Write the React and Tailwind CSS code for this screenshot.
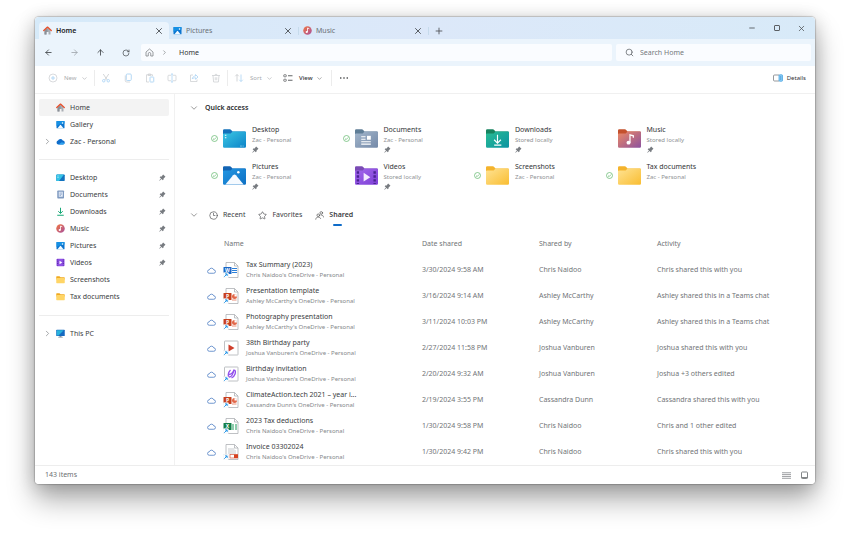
import React, { useState } from "react";
import {
  ArrowLeft,
  ArrowRight,
  ArrowUp,
  ChevronDown,
  ChevronRight,
  Clock3,
  Minus,
  Plus,
  RotateCw,
  Search,
  Star,
  X,
} from "lucide-react";

/* ---------- small icons ---------- */

const HomeIcon = () => (
  <svg viewBox="0 0 18 18" className="size-[9px] shrink-0">
    <path d="M3 8l6-5 6 5v9h-4v-5H7v5H3z" fill="#a9adb3" />
    <path d="M3 9v8h4v-5h2V5z" fill="#8b9097" />
    <path d="M1.500 9L9 2.200 16.500 9" fill="none" stroke="#e8502c" strokeWidth="2.600" strokeLinecap="round" strokeLinejoin="round" />
  </svg>
);

const PictureIcon = () => (
  <svg viewBox="0 0 18 18" className="size-[9px] shrink-0">
    <rect x="1" y="2" width="16" height="14.500" rx="1" fill="#0b74cf" />
    <path d="M1 3a1 1 0 011-1h14a1 1 0 011 1v4L9 8 1 12z" fill="#1590e4" />
    <path d="M3 16.500l5.200-6.700q.8-.8 1.600 0l5.200 6.700z" fill="#f4faff" />
    <circle cx="13" cy="6" r="1.500" fill="#fff" />
  </svg>
);

const MusicIcon = () => (
  <svg viewBox="0 0 18 18" className="size-[9px] shrink-0">
    <defs>
      <linearGradient id="musicDot" x1="0" y1="0" x2="1" y2="1">
        <stop offset="0" stopColor="#f2753f" />
        <stop offset="1" stopColor="#a8529f" />
      </linearGradient>
    </defs>
    <circle cx="9" cy="9" r="8.500" fill="url(#musicDot)" />
    <ellipse cx="7.500" cy="12" rx="2.200" ry="2" fill="#fff" />
    <path d="M9 12V4l3.500 1.500" stroke="#fff" strokeWidth="1.600" fill="none" />
  </svg>
);

const OneDriveIcon = () => (
  <svg viewBox="0 0 18 18" className="size-[9px] shrink-0">
    <path d="M4.500 15A4 4 0 014 7.200 5.300 5.300 0 0113.500 7a4 4 0 010 8z" fill="#0f6cc9" />
    <path d="M4.500 15l7-4.500 5.800 1.300A3.800 3.800 0 0113.500 15z" fill="#2fa4f0" />
  </svg>
);

const DesktopIcon = () => (
  <svg viewBox="0 0 18 18" className="size-[9px] shrink-0">
    <rect x="0.500" y="3" width="17" height="13" rx="1.500" fill="#1273bf" />
    <path d="M2 3h14l-10 13H2A1.500 1.500 0 01.5 14.500v-10z" fill="#34c3e6" />
    <path d="M3 6h2M3 9h2" stroke="#fff" strokeWidth="1.300" />
  </svg>
);

const DocumentIcon = () => (
  <svg viewBox="0 0 18 18" className="size-[9px] shrink-0">
    <rect x="2.500" y="1" width="13.500" height="16" rx="1.500" fill="#7f9ac0" />
    <rect x="5.500" y="3.500" width="8" height="10" fill="#e8effa" />
    <path d="M7 6h5M7 8.500h5M7 11h3" stroke="#5f7fb0" strokeWidth="1" />
  </svg>
);

const DownloadIcon = () => (
  <svg viewBox="0 0 18 18" className="size-[9px] shrink-0" fill="none" stroke="#17a877" strokeWidth="2">
    <path d="M9 1.500v11M4.500 8.500L9 12.800l4.500-4.300M2.500 16.500h13" />
  </svg>
);

const VideoIcon = () => (
  <svg viewBox="0 0 18 18" className="size-[9px] shrink-0">
    <rect x="1" y="1.500" width="16" height="15" rx="1.500" fill="#9152e6" />
    <path d="M3.500 3v12M14.500 3v12" stroke="#4b2099" strokeWidth="2" strokeDasharray="2 1.600" />
    <path d="M7 5.500l5.500 3.500L7 12.500z" fill="#fff" />
  </svg>
);

const SmallFolder = () => (
  <svg viewBox="0 0 18 18" className="size-[9px] shrink-0">
    <path d="M.5 3.500A1.200 1.200 0 011.700 2.300H7l2 2.200h7.300a1.200 1.200 0 011.200 1.200V9H.5z" fill="#f0a920" />
    <rect x=".5" y="5.800" width="17" height="10.500" rx="1.200" fill="#ffd566" />
  </svg>
);

const PcIcon = () => (
  <svg viewBox="0 0 18 18" className="size-[9px] shrink-0">
    <path d="M7 13h4v3H7z" fill="#8593a0" />
    <path d="M4.500 16.500h9" stroke="#8593a0" strokeWidth="1.500" />
    <rect x=".5" y="1.500" width="17" height="12.500" rx="1.200" fill="#1569c0" />
    <path d="M1.500 2.500h14L5 13H1.500z" fill="#29b3dd" />
  </svg>
);

const PinIcon = () => (
  <svg viewBox="0 0 16 16" className="size-[7px] shrink-0" fill="#777b80">
    <path d="M9.500 1.200l5.300 5.300-1.300 1-3 2.600-.4 3.200-1.300 1.200L5.700 11.400 1.500 15.200l-.8-.8 3.900-4.100L1.500 7.200l1.300-1.300 3.200-.4 2.500-3z" />
  </svg>
);

const SyncedIcon = () => (
  <svg viewBox="0 0 14 14" className="size-[7px] shrink-0" fill="none" stroke="#5bb567" strokeWidth="1.400">
    <circle cx="7" cy="7" r="6" />
    <path d="M4 7.200l2.200 2.100L10.200 5" />
  </svg>
);

const CloudIcon = () => (
  <svg viewBox="0 0 18 14" className="h-[7px] w-[9px] shrink-0" fill="none" stroke="#4f7fc4" strokeWidth="1.600">
    <path d="M4.500 12.500a3.400 3.400 0 010-6.800 4.700 4.700 0 019 0 3.400 3.400 0 010 6.800z" />
  </svg>
);

const AddressHome = () => (
  <svg viewBox="0 0 18 18" className="size-[9px] shrink-0" fill="none" stroke="#7a7e82" strokeWidth="1.500" strokeLinejoin="round">
    <path d="M2 8l7-6 7 6v8h-4.500v-4.500a2.500 2.500 0 00-5 0V16H2z" />
  </svg>
);

const PeopleIcon = () => (
  <svg viewBox="0 0 18 18" className="size-[9px] shrink-0" fill="none" stroke="#4b4b4b" strokeWidth="1.300" strokeLinecap="round">
    <circle cx="6.500" cy="8.500" r="2.600" />
    <path d="M1.500 16.500c.3-3 2.200-4.200 5-4.200s4.200 1 4.700 2.700" />
    <circle cx="12.500" cy="3.800" r="2.600" />
    <path d="M12 8c3-.2 4.800 1.300 5 4" />
  </svg>
);

/* ---------- command bar icons ---------- */

const tool = { viewBox: "0 0 20 20", fill: "none", strokeWidth: 1.4, className: "size-[10px] shrink-0" };
const grey = "#c9cbce";
const blue = "#b4d8f5";

const NewIcon = () => (
  <svg {...tool}>
    <circle cx="10" cy="10" r="8" stroke={grey} />
    <path d="M10 6v8M6 10h8" stroke={blue} strokeWidth="2" />
  </svg>
);
const CutIcon = () => (
  <svg {...tool}>
    <path d="M4.500 2l8 12M15.500 2l-8 12" stroke={grey} strokeWidth="1.600" />
    <circle cx="5.500" cy="15.500" r="2.500" stroke={blue} strokeWidth="2" />
    <circle cx="14.500" cy="15.500" r="2.500" stroke={blue} strokeWidth="2" />
  </svg>
);
const CopyIcon = () => (
  <svg {...tool}>
    <path d="M4.500 5v10a3 3 0 003 3H14" stroke={grey} />
    <rect x="6.500" y="2" width="10" height="13" rx="2" stroke={blue} strokeWidth="2" />
  </svg>
);
const PasteIcon = () => (
  <svg {...tool}>
    <path d="M8 18H3V3.500h12V6M6.500 2h5v3h-5z" stroke={grey} />
    <rect x="10" y="8" width="7.500" height="10" rx="1" stroke={blue} strokeWidth="2" />
  </svg>
);
const RenameIcon = () => (
  <svg {...tool}>
    <path d="M8 4.500H3.500A1.500 1.500 0 002 6v8a1.500 1.500 0 001.500 1.500H8M12 4.500h4.500A1.500 1.500 0 0118 6v8a1.500 1.500 0 01-1.500 1.500H12" stroke={grey} />
    <path d="M10 2v16M8 2h4M8 18h4" stroke={blue} strokeWidth="1.800" />
  </svg>
);
const ShareIcon = () => (
  <svg {...tool}>
    <path d="M8 4H3v13h13v-4" stroke={grey} />
    <path d="M6.500 12c.5-4 3-6 6.500-6V3l5 5-5 4.500V9.500c-3 0-5 .5-6.500 2.500z" stroke={blue} strokeWidth="1.800" />
  </svg>
);
const TrashIcon = () => (
  <svg {...tool}>
    <path d="M2 5h16M7.500 5c0-3.500 5-3.500 5 0M4 5l1.200 13h9.600L16 5M8.500 8.500v6M11.500 8.500v6" stroke={grey} />
  </svg>
);
const SortIcon = () => (
  <svg {...tool}>
    <path d="M6 17V3M2.500 6.500L6 3l3.500 3.500" stroke={grey} strokeWidth="1.600" />
    <path d="M14 3v14M10.500 13.500L14 17l3.500-3.500" stroke={blue} strokeWidth="1.800" />
  </svg>
);
const ViewIcon = () => (
  <svg {...tool} stroke="#505356">
    <rect x="1.500" y="3.500" width="5" height="4" rx="1" />
    <rect x="1.500" y="12.500" width="5" height="4" rx="1" />
    <path d="M10 5.500h9M10 14.500h9" strokeWidth="1.800" />
  </svg>
);
const MoreIcon = () => (
  <svg {...tool} fill="#303234">
    <circle cx="3.500" cy="10" r="1.600" />
    <circle cx="10" cy="10" r="1.600" />
    <circle cx="16.500" cy="10" r="1.600" />
  </svg>
);
const DetailsIcon = () => (
  <svg {...tool}>
    <path d="M12 4H3a2 2 0 00-2 2v8a2 2 0 002 2h9" stroke="#6b6f73" />
    <rect x="12" y="3.500" width="7" height="13" rx="1.500" fill="#8dcdf5" stroke="#3d9fe0" />
    <path d="M14.500 7.500h2M14.500 10h2M14.500 12.500h2" stroke="#1b7fc9" />
  </svg>
);

/* ---------- big folders ---------- */

const folderColors = {
  desktop: ["#1471ba", "#3cc8e4", "#0c83c8"],
  documents: ["#5f7d96", "#a3b6cb", "#7489a8"],
  downloads: ["#17835f", "#29bd93", "#0c93a2"],
  music: ["#c4512d", "#ee8a63", "#8b519f"],
  pictures: ["#1264b4", "#2397e2", "#0d6fc3"],
  videos: ["#7a4bb5", "#a368ec", "#7d3fd6"],
  plain: ["#f4b32c", "#ffe394", "#f9bd31"],
};

const folderGlyphs = {
  desktop: (
    <>
      <path d="M4 13h3M4 18h3" stroke="#fff" strokeWidth="2.200" />
      <path d="M36 35h3M41 35h2" stroke="#bfe6f5" strokeWidth="1.600" />
    </>
  ),
  documents: (
    <>
      <path d="M13 16h9M13 21h9M13 26h20M13 31h20" stroke="#fff" strokeWidth="2.200" />
      <rect x="25" y="14" width="8" height="8" fill="#fff" />
    </>
  ),
  downloads: <path d="M24 12v16M17 22l7 7 7-7M17 33h15" fill="none" stroke="#fff" strokeWidth="2.400" />,
  music: (
    <>
      <ellipse cx="22" cy="28" rx="4.200" ry="3.800" fill="#fff" />
      <path d="M25 28V12l7 2v4" fill="none" stroke="#fff" strokeWidth="2.600" />
    </>
  ),
  pictures: (
    <>
      <path d="M5 38l16-19q3-3 6 0l16 19z" fill="#f5faff" />
      <circle cx="32" cy="13" r="2.600" fill="#fff" />
    </>
  ),
  videos: (
    <>
      <path d="M6 11v26M41 11v26" stroke="#4a2391" strokeWidth="5" strokeDasharray="5 3" />
      <path d="M18 14l14 9-14 9z" fill="#f3eaff" />
    </>
  ),
};

const BigFolder = ({ kind }) => {
  const [back, from, to] = folderColors[kind];
  return (
    <svg viewBox="0 0 48 39" preserveAspectRatio="none" className="h-[19px] w-[23px] shrink-0">
      <defs>
        <linearGradient id={`folder-${kind}`} x1="0" y1="0" x2="1" y2="1">
          <stop offset="0" stopColor={from} />
          <stop offset="1" stopColor={to} />
        </linearGradient>
      </defs>
      <path d="M0 3a2.500 2.500 0 012.500-2.500H14q2 0 3.500 2L20 5h25.500A2.500 2.500 0 0148 7.500V20H0z" fill={back} />
      <path d="M0 11q0-2 2-2h14l4-4h25.500A2.500 2.500 0 0148 7.500v28.500a2.500 2.500 0 01-2.500 2.500h-43A2.500 2.500 0 010 36z" fill={`url(#folder-${kind})`} />
      {folderGlyphs[kind]}
    </svg>
  );
};

/* ---------- shared file icons ---------- */

const officeColors = { W: "#1967c7", P: "#c8401f", X: "#13804a" };

const officeMarks = {
  W: <path d="M18 13h10M18 17h10M18 21h10" stroke="#2b7fd8" strokeWidth="2" />,
  P: (
    <>
      <circle cx="23" cy="17" r="5" fill="#e2684a" />
      <path d="M23 17v-5a5 5 0 015 5z" fill="#fff" />
      <path d="M18 24h9" stroke="#e2684a" strokeWidth="1.500" />
    </>
  ),
  X: <path d="M18 14h4M24 14h4M18 18h4M24 18h4M18 22h4M24 22h4" stroke="#1d9a5b" strokeWidth="2.400" />,
};

const FileIcon = ({ kind }) => (
  <svg viewBox="0 0 32 32" className="size-4 shrink-0">
    {kind === "video" || kind === "design" ? (
      <rect x="3" y="2" width="27" height="28" rx="1" fill="#fff" stroke="#a9acb0" strokeWidth="1.500" />
    ) : (
      <>
        <path d="M6 1h17l7 7v23H6z" fill="#fff" stroke="#a9acb0" strokeWidth="1.500" />
        <path d="M23 1v7h7" fill="none" stroke="#a9acb0" strokeWidth="1.500" />
      </>
    )}
    {kind === "video" && <path d="M11 9l12 7-12 7z" fill="#cf3f2c" />}
    {kind === "design" && (
      <g fill="none" stroke="#9250ec" strokeWidth="2.600">
        <path d="M15 8c-5 5-6 14-2 14s8-7 9-15" />
        <path d="M23 8c4 3 1 13-6 16M12 17c4 0 8-4 10-9" />
      </g>
    )}
    {kind === "pdf" && (
      <>
        <path d="M10 10h13M10 14h16M10 18h16" stroke="#b9bcc0" strokeWidth="1.600" />
        <rect x="14" y="21" width="15" height="7" fill="#fff" stroke="#d8573a" strokeWidth="1.400" />
        <rect x="22" y="21" width="8" height="7" fill="#d5401f" />
      </>
    )}
    {officeMarks[kind] && (
      <>
        {officeMarks[kind]}
        <rect x="1" y="10" width="16" height="14" rx="1" fill={officeColors[kind]} />
        <text x="9" y="20" textAnchor="middle" fontSize="10" fontWeight="700" fill="#fff">
          {kind}
        </text>
      </>
    )}
    <rect x="0" y="21" width="11" height="11" rx="1.500" fill="#fff" stroke="#d9dde2" strokeWidth="0.800" />
    <path d="M2.500 29.500L8 24M4 23.800h4.300v4.300" fill="none" stroke="#2595e6" strokeWidth="2" />
  </svg>
);

/* ---------- data ---------- */

const tabs = [
  { name: "Home", icon: <HomeIcon /> },
  { name: "Pictures", icon: <PictureIcon /> },
  { name: "Music", icon: <MusicIcon /> },
];

const places = [
  { name: "Home", icon: <HomeIcon />, active: true },
  { name: "Gallery", icon: <PictureIcon /> },
  { name: "Zac - Personal", icon: <OneDriveIcon />, expandable: true },
];

const folders = [
  { name: "Desktop", icon: <DesktopIcon />, pinned: true },
  { name: "Documents", icon: <DocumentIcon />, pinned: true },
  { name: "Downloads", icon: <DownloadIcon />, pinned: true },
  { name: "Music", icon: <MusicIcon />, pinned: true },
  { name: "Pictures", icon: <PictureIcon />, pinned: true },
  { name: "Videos", icon: <VideoIcon />, pinned: true },
  { name: "Screenshots", icon: <SmallFolder /> },
  { name: "Tax documents", icon: <SmallFolder /> },
];

const devices = [{ name: "This PC", icon: <PcIcon />, expandable: true }];

const quickAccess = [
  { name: "Desktop", where: "Zac - Personal", kind: "desktop", synced: true, pinned: true },
  { name: "Documents", where: "Zac - Personal", kind: "documents", synced: true, pinned: true },
  { name: "Downloads", where: "Stored locally", kind: "downloads", pinned: true },
  { name: "Music", where: "Stored locally", kind: "music", pinned: true },
  { name: "Pictures", where: "Zac - Personal", kind: "pictures", synced: true, pinned: true },
  { name: "Videos", where: "Stored locally", kind: "videos", pinned: true },
  { name: "Screenshots", where: "Zac - Personal", kind: "plain", synced: true },
  { name: "Tax documents", where: "Zac - Personal", kind: "plain", synced: true },
];

const files = [
  { kind: "W", name: "Tax Summary (2023)", owner: "Chris Naidoo", date: "3/30/2024 9:58 AM", activity: "Chris shared this with you" },
  { kind: "P", name: "Presentation template", owner: "Ashley McCarthy", date: "3/16/2024 9:14 AM", activity: "Ashley shared this in a Teams chat" },
  { kind: "P", name: "Photography presentation", owner: "Ashley McCarthy", date: "3/11/2024 10:03 PM", activity: "Ashley shared this in a Teams chat" },
  { kind: "video", name: "38th Birthday party", owner: "Joshua Vanburen", date: "2/27/2024 11:58 PM", activity: "Joshua shared this with you" },
  { kind: "design", name: "Birthday invitation", owner: "Joshua Vanburen", date: "2/20/2024 9:32 AM", activity: "Joshua +3 others edited" },
  { kind: "P", name: "ClimateAction.tech 2021 – year i...", owner: "Cassandra Dunn", date: "2/19/2024 3:55 PM", activity: "Cassandra shared this with you" },
  { kind: "X", name: "2023 Tax deductions", owner: "Chris Naidoo", date: "1/30/2024 9:58 PM", activity: "Chris and 1 other edited" },
  { kind: "pdf", name: "Invoice 03302024", owner: "Chris Naidoo", date: "1/30/2024 9:42 PM", activity: "Chris shared this with you" },
];

const fileTools = [
  { label: "Cut", icon: <CutIcon /> },
  { label: "Copy", icon: <CopyIcon /> },
  { label: "Paste", icon: <PasteIcon /> },
  { label: "Rename", icon: <RenameIcon /> },
  { label: "Share", icon: <ShareIcon /> },
  { label: "Delete", icon: <TrashIcon /> },
];

/* ---------- sections ---------- */

const TitleBar = () => (
  <div className="flex h-[22px] items-end bg-gradient-to-r from-[#d6eaf9] via-[#dce8f9] to-[#d8eaf8] pl-1">
    {tabs.map((tab, i) => (
      <div
        key={tab.name}
        className={`flex h-[17px] w-[130px] items-center rounded-t-[4px] pl-1 ${
          i === 0 ? "bg-[#ebf4fc] font-semibold text-[#202224]" : "text-[#6b7075]"
        }`}
      >
        <button type="button" className="flex flex-1 items-center gap-1 text-left">
          {tab.icon}
          {tab.name}
        </button>
        <button type="button" aria-label={`Close ${tab.name}`} className="px-[5px]">
          <X size={10} strokeWidth={2} className="text-[#3f4246]" />
        </button>
        {i > 0 && <span className="h-2 w-px bg-[#c6dbec]" />}
      </div>
    ))}
    <button type="button" aria-label="New tab" className="flex h-[17px] w-5 items-center justify-center text-[#4a4e52]">
      <Plus size={10} strokeWidth={2} />
    </button>
    <div className="mr-px ml-auto flex h-[22px] items-center text-[#4c5054]">
      <button type="button" aria-label="Minimize" className="flex w-[25px] justify-center">
        <Minus size={8} strokeWidth={2.5} />
      </button>
      <button type="button" aria-label="Maximize" className="flex w-[25px] justify-center">
        <span className="size-[6px] rounded-[1px] border border-[#5b5f63]" />
      </button>
      <button type="button" aria-label="Close window" className="flex w-[25px] justify-center">
        <X size={9} strokeWidth={2} />
      </button>
    </div>
  </div>
);

const AddressBar = () => (
  <div className="flex h-[27px] items-center bg-[#ebf4fc] pr-1">
    <div className="flex w-[106px] items-center text-[#3d4145]">
      <button type="button" aria-label="Back" className="flex w-[26px] justify-center">
        <ArrowLeft size={9} strokeWidth={2.2} />
      </button>
      <button type="button" aria-label="Forward" className="flex w-[26px] justify-center text-[#9fa5ab]">
        <ArrowRight size={9} strokeWidth={2.2} />
      </button>
      <button type="button" aria-label="Up" className="flex w-[26px] justify-center">
        <ArrowUp size={9} strokeWidth={2.2} />
      </button>
      <button type="button" aria-label="Refresh" className="flex w-[26px] justify-center">
        <RotateCw size={8} strokeWidth={2} />
      </button>
    </div>
    <div className="flex h-[17px] flex-1 items-center rounded-[2px] bg-[#fafcff] pl-1">
      <AddressHome />
      <ChevronRight size={7} strokeWidth={2} className="ml-[7px] text-[#6c7074]" />
      <button type="button" className="ml-[11px] text-[#303234]">
        Home
      </button>
    </div>
    <label className="ml-1 flex h-[17px] w-[195px] items-center gap-[6px] rounded-[2px] bg-[#fafcff] pl-[9px]">
      <Search size={9} strokeWidth={2} className="text-[#5e6266]" />
      <input
        type="text"
        aria-label="Search Home"
        placeholder="Search Home"
        className="min-w-0 flex-1 bg-transparent outline-none placeholder:text-[#74787c]"
      />
    </label>
  </div>
);

const Separator = () => <span className="h-4 w-px shrink-0 bg-[#ececec]" />;

const CommandBar = () => (
  <div className="flex h-[28px] items-center border-b border-[#f0f0f0] bg-white pb-[3px] text-[6px] text-[#a9abae]">
    <button type="button" className="flex w-[59px] items-center pl-[13px]">
      <NewIcon />
      <span className="ml-[6px]">New</span>
      <ChevronDown size={7} className="ml-1" />
    </button>
    <Separator />
    {fileTools.map((item) => (
      <button key={item.label} type="button" aria-label={item.label} className="flex w-[22px] justify-center">
        {item.icon}
      </button>
    ))}
    <button type="button" className="flex w-[49px] items-center border-l border-[#ececec] py-[3px] pl-[6px]">
      <SortIcon />
      <span className="ml-[6px]">Sort</span>
      <ChevronDown size={7} className="ml-1" />
    </button>
    <button type="button" className="flex w-[55px] items-center pl-[7px] font-medium text-[#303234]">
      <ViewIcon />
      <span className="ml-[6px]">View</span>
      <ChevronDown size={7} className="ml-1 text-[#777]" />
    </button>
    <Separator />
    <button type="button" aria-label="See more" className="flex w-6 justify-center">
      <MoreIcon />
    </button>
    <button type="button" className="mr-[9px] ml-auto flex items-center gap-1 text-[#303234]">
      <DetailsIcon />
      Details
    </button>
  </div>
);

const NavList = ({ items }) => (
  <ul>
    {items.map((item) => (
      <li key={item.name}>
        <a
          href="#"
          className={`flex h-[17px] items-center rounded-[2px] pr-[3px] ${item.active ? "bg-[#f3f3f3]" : ""}`}
        >
          <span className="flex w-[17px] justify-center text-[#8a8d90]">
            {item.expandable && <ChevronRight size={9} strokeWidth={2} />}
          </span>
          {item.icon}
          <span className="ml-[5px] flex-1">{item.name}</span>
          {item.pinned && <PinIcon />}
        </a>
      </li>
    ))}
  </ul>
);

const Sidebar = () => (
  <nav className="w-[140px] shrink-0 border-r border-[#f1f1f1] pt-[5px] pr-[5px] pl-1 text-[#3a3c3e]">
    <NavList items={places} />
    <hr className="mt-[9px] mb-[9px] border-[#ededed]" />
    <NavList items={folders} />
    <hr className="mt-[10px] mb-[9px] border-[#ededed]" />
    <NavList items={devices} />
  </nav>
);

const QuickAccess = () => (
  <section>
    <h2 className="flex h-4 items-center font-semibold text-[#2b2d2f]">
      <button type="button" aria-label="Collapse quick access" className="mr-[6px]">
        <ChevronDown size={10} strokeWidth={1.8} className="text-[#777]" />
      </button>
      Quick access
    </h2>
    <ul className="mt-[9px] grid grid-cols-4 gap-y-[7px] pr-[78px] pl-[22px]">
      {quickAccess.map((item) => (
        <li key={item.name}>
          <a href="#" className="flex h-[30px] items-start">
            <span className="flex h-[27px] items-center gap-[5px]">
              <span className="w-[7px]">{item.synced && <SyncedIcon />}</span>
              <BigFolder kind={item.kind} />
            </span>
            <span className="ml-[6px] flex flex-col leading-[10px]">
              <span className="text-[#333537]">{item.name}</span>
              <span className="text-[6px] text-[#8f9295]">{item.where}</span>
              {item.pinned && (
                <span className="pt-px">
                  <PinIcon />
                </span>
              )}
            </span>
          </a>
        </li>
      ))}
    </ul>
  </section>
);

const views = [
  { name: "Recent", icon: <Clock3 size={9} strokeWidth={1.6} /> },
  { name: "Favorites", icon: <Star size={9} strokeWidth={1.6} /> },
  { name: "Shared", icon: <PeopleIcon /> },
];

const SharedFiles = () => {
  const [view, setView] = useState("Shared");

  return (
    <section>
      <div className="mt-[15px] flex h-[19px] items-start">
        <button type="button" aria-label="Collapse list" className="mt-[3px] mr-[10px]">
          <ChevronDown size={10} strokeWidth={1.8} className="text-[#777]" />
        </button>
        <div className="flex gap-[13px]">
          {views.map((item) => (
            <button
              key={item.name}
              type="button"
              onClick={() => setView(item.name)}
              className={`flex flex-col items-center text-[#3b3d3f] ${view === item.name ? "font-semibold" : ""}`}
            >
              <span className="flex h-4 items-center gap-[5px]">
                {item.icon}
                {item.name}
              </span>
              {view === item.name && <span className="mt-px ml-[7px] h-[2px] w-[9px] rounded-full bg-[#0f6cc9]" />}
            </button>
          ))}
        </div>
      </div>
      <table className="mt-[5px] ml-[18px] table-fixed text-left text-[#717477]">
        <thead>
          <tr className="h-[26px]">
            <th className="w-[215px] pl-[17px] font-normal">Name</th>
            <th className="w-[117px] font-normal">Date shared</th>
            <th className="w-[118px] font-normal">Shared by</th>
            <th className="font-normal">Activity</th>
          </tr>
        </thead>
        <tbody>
          {files.map((file) => (
            <tr key={file.name} className="h-[26px]">
              <td className="p-0">
                <div className="flex items-center gap-[7px]">
                  <CloudIcon />
                  <FileIcon kind={file.kind} />
                  <div className="leading-[10px]">
                    <p className="text-[#3a3c3e]">{file.name}</p>
                    <p className="text-[6px] text-[#85888b]">{file.owner}'s OneDrive - Personal</p>
                  </div>
                </div>
              </td>
              <td>{file.date}</td>
              <td>{file.owner}</td>
              <td>{file.activity}</td>
            </tr>
          ))}
        </tbody>
      </table>
    </section>
  );
};

const StatusBar = () => (
  <footer className="flex h-[19px] items-center justify-between border-t border-[#ededed] pr-[6px] pl-[10px] text-[#6c6f72]">
    <span>143 items</span>
    <div className="flex items-center gap-[9px]">
      <button type="button" aria-label="Details view">
        <svg viewBox="0 0 18 14" className="h-[7px] w-[9px]" stroke="#85888b" strokeWidth="1.600">
          <path d="M0 1.500h18M0 5.200h18M0 8.900h18M0 12.600h18" />
        </svg>
      </button>
      <button type="button" aria-label="Large icons view">
        <svg viewBox="0 0 18 18" className="size-[9px]" fill="none" stroke="#75787b" strokeWidth="1.800">
          <rect x="3" y="2" width="12" height="13" rx="1.500" />
          <path d="M3 13h12" />
        </svg>
      </button>
    </div>
  </footer>
);

const App = () => {
  return (
    <main className="overflow-hidden bg-white px-[35px] pt-[17px] pb-[52px] font-['Noto_Sans','Open_Sans',sans-serif] text-[7px] leading-[10px]">
      <div className="rounded-[4px] shadow-[0_0_1px_1px_rgba(0,0,0,0.18),0_2px_18px_rgba(0,0,0,0.18),0_16px_28px_rgba(0,0,0,0.32)]">
        <div className="overflow-hidden rounded-[4px] bg-white">
          <TitleBar />
          <AddressBar />
          <CommandBar />
          <div className="flex">
            <Sidebar />
            <div className="min-w-0 flex-1 pt-[6px] pl-[14px]">
              <QuickAccess />
              <SharedFiles />
            </div>
          </div>
          <StatusBar />
        </div>
      </div>
    </main>
  );
};

export default App;
